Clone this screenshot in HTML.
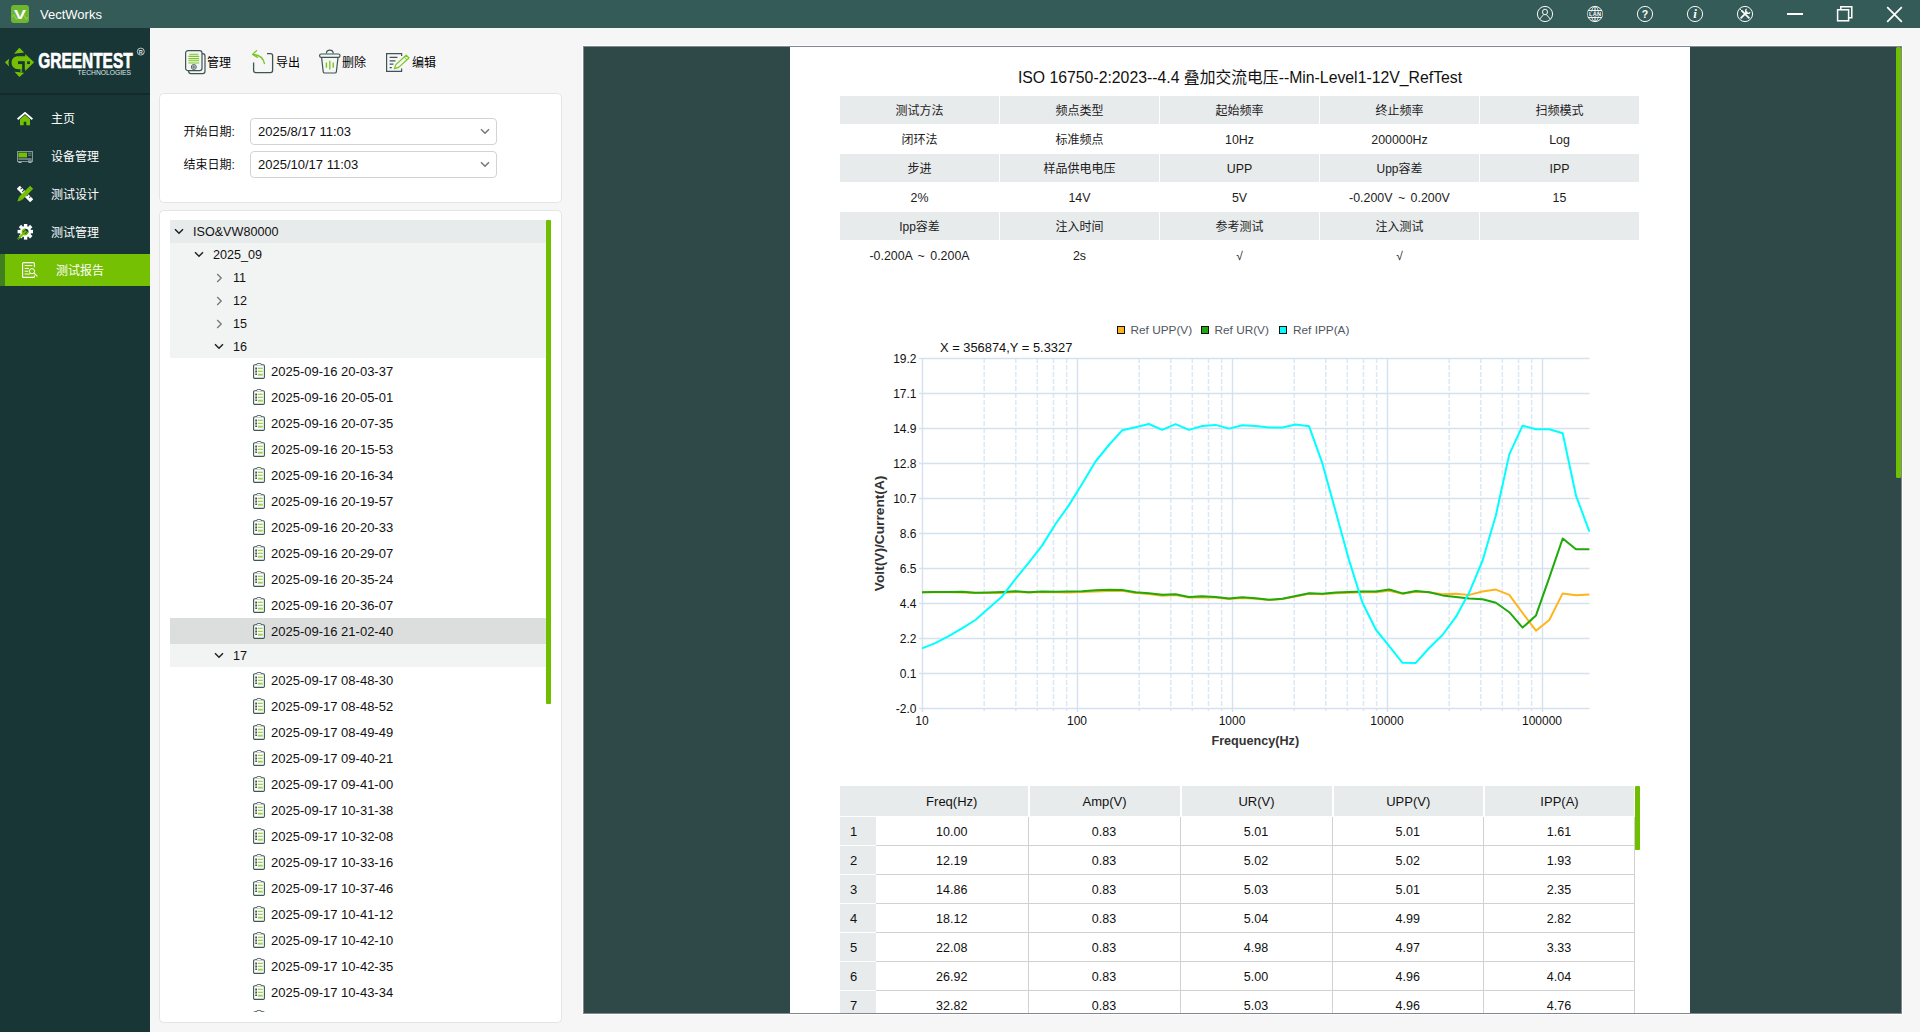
<!DOCTYPE html>
<html lang="zh-CN"><head><meta charset="utf-8"><title>VectWorks</title>
<style>
*{box-sizing:border-box;margin:0;padding:0}
html,body{width:1920px;height:1032px;overflow:hidden}
body{position:relative;background:#f6f6f6;font-family:"Liberation Sans","Noto Sans CJK SC",sans-serif;font-size:12px;color:#1a1a1a}
.abs{position:absolute}
#titlebar{position:absolute;left:0;top:0;width:1920px;height:28px;background:#355b58}
#titlebar .name{position:absolute;left:40px;top:1px;height:28px;line-height:28px;color:#fff;font-size:13px}
#sidebar{position:absolute;left:0;top:28px;width:150px;height:1004px;background:#193637}
#sidebar .sep{position:absolute;left:0;top:65px;width:150px;height:2px;background:#132a2b}
.mi{position:absolute;left:0;width:150px;height:32px;color:#fff;font-size:12px;line-height:32px}
.mi span{position:absolute;left:51px;top:0.8px;white-space:nowrap}
.mi svg{position:absolute;left:17px;top:8px}
.mi.act{background:#76c004}
.mi.act:before{content:"";position:absolute;left:0;top:0;width:5px;height:32px;background:#3f7f20}
.mi.act span{left:56px}
.mi.act svg{left:22px}
.panel{position:absolute;background:#fff;border:1px solid #e3e5e5;border-radius:4.500px}
.tb{position:absolute;top:51.3px;height:24px;font-size:12px;line-height:24px;color:#000;white-space:nowrap}
.tb span{position:absolute;top:0}
.lbl{position:absolute;font-size:12px;color:#111;white-space:nowrap}
.dt{position:absolute;left:250px;width:247px;height:27px;border:1px solid #d3d3d3;border-radius:4px;background:#fff;font-size:13px;line-height:25px;padding-left:7px;color:#111}
.dt svg{position:absolute;right:6px;top:9px}

.trow{position:absolute;left:170px;width:376px}
.trow .t{position:absolute;top:0;white-space:nowrap;font-size:13px;color:#111}
.trow svg{position:absolute}
#report{position:absolute;left:583px;top:46px;width:1319px;height:968px;background:#2f4949;border:1px solid #828790;box-shadow:0 0 0 1px #fff}
#rclip{position:absolute;left:0;top:0;width:1317px;height:966px;overflow:hidden}
#sheet{position:absolute;left:206px;top:0;width:900px;height:966px;background:#fff}
.ic{position:absolute;width:159px;height:28px;line-height:30.500px;text-align:center;font-size:12px;color:#1c1c1c;white-space:nowrap}
.ic.h{background:#e8ebec}
.ic.l{font-size:12.400px}
.ic.w{font-size:12.400px;word-spacing:2px}
.dc{position:absolute;height:29px;line-height:30.500px;text-align:center;font-size:12.5px;color:#111;border-right:1px solid #d2d2d2;border-bottom:1px solid #d2d2d2;background:#fff}
.dh{position:absolute;top:0;height:30px;line-height:31px;text-align:center;font-size:13px;color:#111;background:#e8ebec}
.rn{position:absolute;left:0;width:36px;height:28px;line-height:29px;background:#e8ebec;font-size:13px;padding-left:10px;color:#111}
</style></head><body>
<div id="titlebar"><svg class="abs" style="left:11px;top:5px" width="18" height="18" viewBox="0 0 18 18">
<rect x="0" y="0" width="18" height="18" rx="3" fill="#6db730"/>
<path d="M1.5 12c1-3 1.6-3 2.6 0s1.6 3 2.6 0M11.3 12c1-3 1.6-3 2.6 0s1.6 3 2.6 0" fill="none" stroke="#a9dd7c" stroke-width="0.7"/>
<text x="3" y="14.400" font-family="Liberation Sans,sans-serif" font-size="13.500" font-weight="bold" fill="#fff" textLength="12" lengthAdjust="spacingAndGlyphs">V</text></svg><div class="name">VectWorks</div><svg class="abs" style="left:1536px;top:5px" width="18" height="18" viewBox="0 0 18 18" fill="none" stroke="#fff" stroke-width="0.95">
<circle cx="9" cy="9" r="7.6"/><ellipse cx="9" cy="7" rx="2.5" ry="2.8"/><path d="M3.6 14.2L7.6 9.6M14.4 14.2L10.4 9.6"/></svg>
<svg class="abs" style="left:1586px;top:5px" width="18" height="18" viewBox="0 0 18 18" fill="none" stroke="#fff" stroke-width="1">
<circle cx="9" cy="9" r="7.6" stroke-width="0.95"/><ellipse cx="9" cy="9" rx="3.6" ry="7.6" stroke-width="0.8"/><path d="M9 1.4v15.2M2.2 5.6h13.6M2.2 12.4h13.6"/>
<rect x="1.6" y="6.6" width="14.8" height="4.8" fill="#355b58" stroke="none"/>
<text x="9" y="11.1" font-family="Liberation Sans,sans-serif" font-size="5.6" font-weight="bold" fill="#fff" stroke="none" text-anchor="middle" textLength="12">LAN</text></svg>
<svg class="abs" style="left:1635.5px;top:5px" width="18" height="18" viewBox="0 0 18 18" fill="none" stroke="#fff" stroke-width="1.1">
<circle cx="9" cy="9" r="7.6" stroke-width="0.95"/><text x="9" y="12.8" font-family="Liberation Sans,sans-serif" font-size="10.5" font-weight="bold" fill="#fff" stroke="none" text-anchor="middle">?</text></svg>
<svg class="abs" style="left:1685.7px;top:5px" width="18" height="18" viewBox="0 0 18 18" fill="none" stroke="#fff" stroke-width="1.1">
<circle cx="9" cy="9" r="7.6" stroke-width="0.95"/><text x="9" y="13.2" font-family="Liberation Serif,serif" font-size="13" font-weight="bold" font-style="italic" fill="#fff" stroke="none" text-anchor="middle">i</text></svg>
<svg class="abs" style="left:1736px;top:5px" width="18" height="18" viewBox="0 0 18 18" fill="none" stroke="#fff" stroke-width="1.1">
<circle cx="9" cy="9" r="7.6" stroke-width="0.95"/><path d="M4.6 13.4L11.4 6.600" stroke-width="1.700"/><path d="M10.600 3.900a2.500 2.500 0 1 0 3.500 3.500" stroke-width="1.300"/><path d="M5.400 5.400L13.400 13.400" stroke-width="1.700"/><path d="M3.800 3.800L6.200 6.200" stroke-width="0.900"/></svg>
<div class="abs" style="left:1787px;top:13px;width:16px;height:2px;background:#fff"></div>
<svg class="abs" style="left:1836px;top:5px" width="18" height="18" viewBox="0 0 18 18" fill="none" stroke="#fff" stroke-width="1.5">
<rect x="1.6" y="4.8" width="11" height="11"/><path d="M4.8 4.8V1.8h11v11h-3.2"/></svg>
<svg class="abs" style="left:1886px;top:5.5px" width="17" height="17" viewBox="0 0 17 17" fill="none" stroke="#fff" stroke-width="1.7">
<path d="M1.2 1.2l14.6 14.6M15.8 1.2L1.2 15.8"/></svg></div>
<div id="sidebar"><svg class="abs" style="left:0;top:12px" width="150" height="50" viewBox="0 0 150 50">
<g transform="translate(19.4,22.35)">
<path d="M0 -14.5L4.8 -9.9L-5.4 -8.7Z" fill="#76c004"/>
<path d="M0 14.7L-4.85 9.5L4.85 10.3Z" fill="#76c004"/>
<path d="M-14.5 0L-10.3 -3.7Q-11.4 0 -10.3 4.1Z" fill="#76c004"/>
<path d="M-1 -6H5.8V-8.3L14.7 0L5.8 8.7V6.8H-1C-5.5 6.8 -7.75 4 -7.75 0.4C-7.75 -3.4 -5.5 -6 -1 -6Z" fill="#76c004"/>
<rect x="-1.36" y="-1.16" width="6.76" height="2.9" fill="#193637"/>
<rect x="2.7" y="1.6" width="2.7" height="8.3" fill="#193637"/>
<rect x="7.75" y="-1" width="2.75" height="2.75" fill="#193637"/>
<rect x="0.8" y="6.8" width="1.9" height="3.4" fill="#5c9c12"/>
</g>
<text x="38.2" y="28.1" font-family="Liberation Sans,sans-serif" font-weight="bold" font-size="21.5" fill="#fff" stroke="#fff" stroke-width="0.7" textLength="94.5" lengthAdjust="spacingAndGlyphs">GREENTEST</text>
<text x="77.6" y="34.9" font-family="Liberation Sans,sans-serif" font-size="6.4" fill="#dfe8e8" textLength="53.4" lengthAdjust="spacingAndGlyphs">TECHNOLOGIES</text>
<circle cx="140.8" cy="11.6" r="3.5" fill="none" stroke="#dfe7e7" stroke-width="0.8"/>
<text x="140.8" y="13.7" font-family="Liberation Sans,sans-serif" font-size="5.5" font-weight="bold" fill="#dfe7e7" text-anchor="middle">R</text>
</svg><div class="sep"></div>
<div class="mi" style="top:74px"><svg style="top:10px" width="16" height="16" viewBox="0 0 16 16"><path d="M3 7.2L8 3l5 4.200V13.300H9.300V9.800H6.700V13.300H3Z" fill="#76c004"/><path d="M0.600 7.300L8 0.900l7.400 6.400" fill="none" stroke="#fff" stroke-width="1.8" stroke-linejoin="miter"/></svg><span>主页</span></div>
<div class="mi" style="top:112px"><svg style="top:8.5px" width="16" height="16" viewBox="0 0 16 16"><rect x="0.4" y="2.600" width="15.200" height="9.800" fill="none" stroke="#9fb0b0" stroke-width="0.800"/><rect x="1.400" y="3.600" width="8.600" height="4.800" fill="#76c004"/><path d="M1.400 10h13.200M1.400 13.400h3.200M11.400 13.400h3.200" stroke="#c9d3d3" stroke-width="0.900"/><path d="M11 4.200h3.600M11 6.200h3.600" stroke="#8fa0a0" stroke-width="0.800"/><circle cx="12" cy="11.300" r="0.600" fill="#c9d3d3"/><circle cx="14" cy="11.300" r="0.600" fill="#c9d3d3"/></svg><span>设备管理</span></div>
<div class="mi" style="top:150px"><svg width="16" height="16" viewBox="0 0 16 16"><g transform="rotate(45 8 8)"><rect x="-1.500" y="5.800" width="19" height="4.400" fill="#fff"/><path d="M1.500 5.800v2M4.500 5.800v2.600M7.500 5.800v2M10.500 5.800v2.600M13.500 5.800v2" stroke="#193637" stroke-width="1"/></g><g transform="rotate(-45 8 8)"><rect x="1.600" y="5.800" width="13.400" height="4.400" fill="#76c004"/><path d="M1.600 5.800L-2.600 8l4.200 2.200Z" fill="#76c004"/><rect x="15" y="5.800" width="2.400" height="4.400" fill="#76c004"/></g></svg><span>测试设计</span></div>
<div class="mi" style="top:188px"><svg width="16" height="16" viewBox="0 0 16 16"><g transform="translate(8.600,7.600)"><rect x="-1.700" y="-8" width="3.400" height="3.400" transform="rotate(0)" fill="#fff"/><rect x="-1.700" y="-8" width="3.400" height="3.400" transform="rotate(45)" fill="#fff"/><rect x="-1.700" y="-8" width="3.400" height="3.400" transform="rotate(90)" fill="#fff"/><rect x="-1.700" y="-8" width="3.400" height="3.400" transform="rotate(135)" fill="#fff"/><rect x="-1.700" y="-8" width="3.400" height="3.400" transform="rotate(180)" fill="#fff"/><rect x="-1.700" y="-8" width="3.400" height="3.400" transform="rotate(225)" fill="#fff"/><rect x="-1.700" y="-8" width="3.400" height="3.400" transform="rotate(270)" fill="#fff"/><rect x="-1.700" y="-8" width="3.400" height="3.400" transform="rotate(315)" fill="#fff"/><circle r="5.600" fill="#fff"/><circle r="2.900" fill="#193637"/></g><path d="M1.400 14.600L8.600 7.400" stroke="#76c004" stroke-width="2" stroke-linecap="round"/><path d="M8.200 5.400a2.600 2.600 0 1 0 2.400 2.400" fill="none" stroke="#76c004" stroke-width="1.600"/><circle cx="1.700" cy="14.300" r="0.500" fill="#193637"/></svg><span>测试管理</span></div>
<div class="mi act" style="top:226px"><svg width="16" height="16" viewBox="0 0 16 16" fill="none" stroke="#fff"><path d="M12.400 5.200V1.600a1 1 0 0 0 -1 -1H1.600a1 1 0 0 0 -1 1V14.400a1 1 0 0 0 1 1H11.400a1 1 0 0 0 1 -1V13.600" stroke-width="1.100"/><path d="M2.600 3.600H10.400M2.600 6.400H7M2.600 9.200H6.400M2.600 12H8.200" stroke-width="1"/><circle cx="10" cy="9.200" r="2.600" stroke-width="1"/><path d="M12 11.200L15.400 14.400" stroke-width="1.100"/></svg><span>测试报告</span></div>
</div>
<svg class="abs" style="left:184px;top:49px" width="23" height="26" viewBox="0 0 23 26" fill="none">
<rect x="4.600" y="4.600" width="16.400" height="20" rx="2.400" stroke="#3d5553" stroke-width="1.200" fill="#f6f6f6"/>
<rect x="1.600" y="1.600" width="16.400" height="20" rx="2.400" stroke="#3d5553" stroke-width="1.200" fill="#f6f6f6"/>
<path d="M5.400 5.200h8.800M4.400 7.400h10.800M4.400 9.600h10.800M4.400 11.800h10.800M4.400 14h10.800" stroke="#7ac621" stroke-width="1.100"/>
<circle cx="9.800" cy="18" r="2.500" stroke="#3d5553" stroke-width="0.900"/><path d="M9.800 16.200v3.600M8 18h3.600" stroke="#3d5553" stroke-width="0.800"/></svg><div class="tb" style="left:207px">管理</div>
<svg class="abs" style="left:251px;top:49px" width="24" height="26" viewBox="0 0 24 26" fill="none">
<path d="M16 4.600H19.600a2 2 0 0 1 2 2V21.600a2 2 0 0 1 -2 2H4.600a2 2 0 0 1 -2 -2V13.400" stroke="#3d5553" stroke-width="1.300"/>
<path d="M1.800 5.400C7.400 5.600 12.400 8.600 13.600 15.200" stroke="#7ac621" stroke-width="1.300"/>
<path d="M5.600 1.600L1.600 5.400L6.400 8.400" stroke="#7ac621" stroke-width="1.300" stroke-linejoin="round" stroke-linecap="round"/></svg><div class="tb" style="left:276px">导出</div>
<svg class="abs" style="left:318px;top:49px" width="24" height="26" viewBox="0 0 24 26" fill="none">
<path d="M8.400 4.600a3.400 3.400 0 0 1 6.800 0" stroke="#3d5553" stroke-width="1.200"/>
<rect x="1.600" y="5" width="20.400" height="3.400" rx="1.600" stroke="#3d5553" stroke-width="1.200"/>
<path d="M3.600 8.600L5.200 22.600a1.600 1.600 0 0 0 1.600 1.400H16.800a1.600 1.600 0 0 0 1.600 -1.400L20 8.600" stroke="#3d5553" stroke-width="1.200"/>
<path d="M8.400 13.600v5.200M11.800 11.800v8.800M15.200 13.600v5.200" stroke="#7ac621" stroke-width="1.400"/></svg><div class="tb" style="left:342px">删除</div>
<svg class="abs" style="left:385px;top:49px" width="26" height="26" viewBox="0 0 26 26" fill="none">
<path d="M16.600 19.600V22.400H1.600V4.600H16.600V7" stroke="#3d5553" stroke-width="1.200"/>
<path d="M4.600 8.400H12.400M4.600 11.800H10.400M4.600 15.200H8.400M4.600 18.600H6.800" stroke="#3d5553" stroke-width="1.200"/>
<path d="M9.400 19.600L10.800 15.600L21.200 6.200L24 9L13.600 18.400Z" stroke="#7ac621" stroke-width="1.200" stroke-linejoin="round" fill="#f6f6f6"/>
<path d="M19.200 8L22 10.800" stroke="#7ac621" stroke-width="1"/></svg><div class="tb" style="left:412px">编辑</div>
<div class="panel" style="left:159px;top:93px;width:403px;height:110px"></div>
<div class="lbl" style="left:183.5px;top:119px;line-height:27px">开始日期:</div><div class="dt" style="top:118px">2025/8/17 11:03<svg width="10" height="7" viewBox="0 0 10 7" fill="none"><path d="M1 1.200L5 5.200L9 1.200" stroke="#777" stroke-width="1.500"/></svg></div>
<div class="lbl" style="left:183.5px;top:152px;line-height:27px">结束日期:</div><div class="dt" style="top:151px">2025/10/17 11:03<svg width="10" height="7" viewBox="0 0 10 7" fill="none"><path d="M1 1.200L5 5.200L9 1.200" stroke="#777" stroke-width="1.500"/></svg></div>
<div class="panel" style="left:159px;top:210px;width:403px;height:813px"></div>
<div class="abs" style="left:0;top:220px;width:560px;height:792px;overflow:hidden">
<div class="trow" style="top:0px;height:23px;background:#e8ebeb"><svg style="left:4px;top:8px" width="10" height="7" viewBox="0 0 10 7" fill="none"><path d="M1 1.200L5 5.200L9 1.200" stroke="#222" stroke-width="1.500"/></svg><div class="t" style="left:23px;line-height:24.6px;font-size:12.600px">ISO&amp;VW80000</div></div>
<div class="trow" style="top:23px;height:23px;background:#f2f4f4"><svg style="left:24px;top:8px" width="10" height="7" viewBox="0 0 10 7" fill="none"><path d="M1 1.200L5 5.200L9 1.200" stroke="#222" stroke-width="1.500"/></svg><div class="t" style="left:43px;line-height:24.6px;font-size:12.600px">2025_09</div></div>
<div class="trow" style="top:46px;height:23px;background:#f2f4f4"><svg style="left:46px;top:6.500px" width="7" height="10" viewBox="0 0 7 10" fill="none"><path d="M1.200 1L5.200 5L1.200 9" stroke="#777" stroke-width="1.300"/></svg><div class="t" style="left:63px;line-height:24.6px;font-size:12.600px">11</div></div>
<div class="trow" style="top:69px;height:23px;background:#f2f4f4"><svg style="left:46px;top:6.500px" width="7" height="10" viewBox="0 0 7 10" fill="none"><path d="M1.200 1L5.200 5L1.200 9" stroke="#777" stroke-width="1.300"/></svg><div class="t" style="left:63px;line-height:24.6px;font-size:12.600px">12</div></div>
<div class="trow" style="top:92px;height:23px;background:#f2f4f4"><svg style="left:46px;top:6.500px" width="7" height="10" viewBox="0 0 7 10" fill="none"><path d="M1.200 1L5.200 5L1.200 9" stroke="#777" stroke-width="1.300"/></svg><div class="t" style="left:63px;line-height:24.6px;font-size:12.600px">15</div></div>
<div class="trow" style="top:115px;height:23px;background:#f2f4f4"><svg style="left:44px;top:8px" width="10" height="7" viewBox="0 0 10 7" fill="none"><path d="M1 1.200L5 5.200L9 1.200" stroke="#222" stroke-width="1.500"/></svg><div class="t" style="left:63px;line-height:24.6px;font-size:12.600px">16</div></div>
<div class="trow" style="top:138px;height:26px;background:transparent"><svg style="left:83px;top:5px" width="12" height="16" viewBox="0 0 12 16" fill="none"><rect x="0.600" y="1.800" width="10.800" height="13.600" rx="1.200" stroke="#3d5553" stroke-width="1.100" fill="#fff"/><path d="M3.800 2V1.200a.8 .8 0 0 1 .8 -.8H7.400a.8 .8 0 0 1 .8 .8V2" stroke="#3d5553" stroke-width="0.900" fill="#fff"/><path d="M2.400 5.200h1.400M2.400 8.200h1.400M2.400 11.200h1.400" stroke="#222" stroke-width="1.500"/><path d="M2.400 6.600h1.400M2.400 9.600h1.400" stroke="#222" stroke-width="0.600"/><path d="M4.800 5.200H9.800M4.800 8.200H9.800M4.800 11.200H9.800" stroke="#7ac621" stroke-width="1.100"/><path d="M4.800 12.600H9.800" stroke="#b9dd8a" stroke-width="1"/></svg><div class="t" style="left:101px;line-height:27.4px">2025-09-16 20-03-37</div></div>
<div class="trow" style="top:164px;height:26px;background:transparent"><svg style="left:83px;top:5px" width="12" height="16" viewBox="0 0 12 16" fill="none"><rect x="0.600" y="1.800" width="10.800" height="13.600" rx="1.200" stroke="#3d5553" stroke-width="1.100" fill="#fff"/><path d="M3.800 2V1.200a.8 .8 0 0 1 .8 -.8H7.400a.8 .8 0 0 1 .8 .8V2" stroke="#3d5553" stroke-width="0.900" fill="#fff"/><path d="M2.400 5.200h1.400M2.400 8.200h1.400M2.400 11.200h1.400" stroke="#222" stroke-width="1.500"/><path d="M2.400 6.600h1.400M2.400 9.600h1.400" stroke="#222" stroke-width="0.600"/><path d="M4.800 5.200H9.800M4.800 8.200H9.800M4.800 11.200H9.800" stroke="#7ac621" stroke-width="1.100"/><path d="M4.800 12.600H9.800" stroke="#b9dd8a" stroke-width="1"/></svg><div class="t" style="left:101px;line-height:27.4px">2025-09-16 20-05-01</div></div>
<div class="trow" style="top:190px;height:26px;background:transparent"><svg style="left:83px;top:5px" width="12" height="16" viewBox="0 0 12 16" fill="none"><rect x="0.600" y="1.800" width="10.800" height="13.600" rx="1.200" stroke="#3d5553" stroke-width="1.100" fill="#fff"/><path d="M3.800 2V1.200a.8 .8 0 0 1 .8 -.8H7.400a.8 .8 0 0 1 .8 .8V2" stroke="#3d5553" stroke-width="0.900" fill="#fff"/><path d="M2.400 5.200h1.400M2.400 8.200h1.400M2.400 11.200h1.400" stroke="#222" stroke-width="1.500"/><path d="M2.400 6.600h1.400M2.400 9.600h1.400" stroke="#222" stroke-width="0.600"/><path d="M4.800 5.200H9.800M4.800 8.200H9.800M4.800 11.200H9.800" stroke="#7ac621" stroke-width="1.100"/><path d="M4.800 12.600H9.800" stroke="#b9dd8a" stroke-width="1"/></svg><div class="t" style="left:101px;line-height:27.4px">2025-09-16 20-07-35</div></div>
<div class="trow" style="top:216px;height:26px;background:transparent"><svg style="left:83px;top:5px" width="12" height="16" viewBox="0 0 12 16" fill="none"><rect x="0.600" y="1.800" width="10.800" height="13.600" rx="1.200" stroke="#3d5553" stroke-width="1.100" fill="#fff"/><path d="M3.800 2V1.200a.8 .8 0 0 1 .8 -.8H7.400a.8 .8 0 0 1 .8 .8V2" stroke="#3d5553" stroke-width="0.900" fill="#fff"/><path d="M2.400 5.200h1.400M2.400 8.200h1.400M2.400 11.200h1.400" stroke="#222" stroke-width="1.500"/><path d="M2.400 6.600h1.400M2.400 9.600h1.400" stroke="#222" stroke-width="0.600"/><path d="M4.800 5.200H9.800M4.800 8.200H9.800M4.800 11.200H9.800" stroke="#7ac621" stroke-width="1.100"/><path d="M4.800 12.600H9.800" stroke="#b9dd8a" stroke-width="1"/></svg><div class="t" style="left:101px;line-height:27.4px">2025-09-16 20-15-53</div></div>
<div class="trow" style="top:242px;height:26px;background:transparent"><svg style="left:83px;top:5px" width="12" height="16" viewBox="0 0 12 16" fill="none"><rect x="0.600" y="1.800" width="10.800" height="13.600" rx="1.200" stroke="#3d5553" stroke-width="1.100" fill="#fff"/><path d="M3.800 2V1.200a.8 .8 0 0 1 .8 -.8H7.400a.8 .8 0 0 1 .8 .8V2" stroke="#3d5553" stroke-width="0.900" fill="#fff"/><path d="M2.400 5.200h1.400M2.400 8.200h1.400M2.400 11.200h1.400" stroke="#222" stroke-width="1.500"/><path d="M2.400 6.600h1.400M2.400 9.600h1.400" stroke="#222" stroke-width="0.600"/><path d="M4.800 5.200H9.800M4.800 8.200H9.800M4.800 11.200H9.800" stroke="#7ac621" stroke-width="1.100"/><path d="M4.800 12.600H9.800" stroke="#b9dd8a" stroke-width="1"/></svg><div class="t" style="left:101px;line-height:27.4px">2025-09-16 20-16-34</div></div>
<div class="trow" style="top:268px;height:26px;background:transparent"><svg style="left:83px;top:5px" width="12" height="16" viewBox="0 0 12 16" fill="none"><rect x="0.600" y="1.800" width="10.800" height="13.600" rx="1.200" stroke="#3d5553" stroke-width="1.100" fill="#fff"/><path d="M3.800 2V1.200a.8 .8 0 0 1 .8 -.8H7.400a.8 .8 0 0 1 .8 .8V2" stroke="#3d5553" stroke-width="0.900" fill="#fff"/><path d="M2.400 5.200h1.400M2.400 8.200h1.400M2.400 11.200h1.400" stroke="#222" stroke-width="1.500"/><path d="M2.400 6.600h1.400M2.400 9.600h1.400" stroke="#222" stroke-width="0.600"/><path d="M4.800 5.200H9.800M4.800 8.200H9.800M4.800 11.200H9.800" stroke="#7ac621" stroke-width="1.100"/><path d="M4.800 12.600H9.800" stroke="#b9dd8a" stroke-width="1"/></svg><div class="t" style="left:101px;line-height:27.4px">2025-09-16 20-19-57</div></div>
<div class="trow" style="top:294px;height:26px;background:transparent"><svg style="left:83px;top:5px" width="12" height="16" viewBox="0 0 12 16" fill="none"><rect x="0.600" y="1.800" width="10.800" height="13.600" rx="1.200" stroke="#3d5553" stroke-width="1.100" fill="#fff"/><path d="M3.800 2V1.200a.8 .8 0 0 1 .8 -.8H7.400a.8 .8 0 0 1 .8 .8V2" stroke="#3d5553" stroke-width="0.900" fill="#fff"/><path d="M2.400 5.200h1.400M2.400 8.200h1.400M2.400 11.200h1.400" stroke="#222" stroke-width="1.500"/><path d="M2.400 6.600h1.400M2.400 9.600h1.400" stroke="#222" stroke-width="0.600"/><path d="M4.800 5.200H9.800M4.800 8.200H9.800M4.800 11.200H9.800" stroke="#7ac621" stroke-width="1.100"/><path d="M4.800 12.600H9.800" stroke="#b9dd8a" stroke-width="1"/></svg><div class="t" style="left:101px;line-height:27.4px">2025-09-16 20-20-33</div></div>
<div class="trow" style="top:320px;height:26px;background:transparent"><svg style="left:83px;top:5px" width="12" height="16" viewBox="0 0 12 16" fill="none"><rect x="0.600" y="1.800" width="10.800" height="13.600" rx="1.200" stroke="#3d5553" stroke-width="1.100" fill="#fff"/><path d="M3.800 2V1.200a.8 .8 0 0 1 .8 -.8H7.400a.8 .8 0 0 1 .8 .8V2" stroke="#3d5553" stroke-width="0.900" fill="#fff"/><path d="M2.400 5.200h1.400M2.400 8.200h1.400M2.400 11.200h1.400" stroke="#222" stroke-width="1.500"/><path d="M2.400 6.600h1.400M2.400 9.600h1.400" stroke="#222" stroke-width="0.600"/><path d="M4.800 5.200H9.800M4.800 8.200H9.800M4.800 11.200H9.800" stroke="#7ac621" stroke-width="1.100"/><path d="M4.800 12.600H9.800" stroke="#b9dd8a" stroke-width="1"/></svg><div class="t" style="left:101px;line-height:27.4px">2025-09-16 20-29-07</div></div>
<div class="trow" style="top:346px;height:26px;background:transparent"><svg style="left:83px;top:5px" width="12" height="16" viewBox="0 0 12 16" fill="none"><rect x="0.600" y="1.800" width="10.800" height="13.600" rx="1.200" stroke="#3d5553" stroke-width="1.100" fill="#fff"/><path d="M3.800 2V1.200a.8 .8 0 0 1 .8 -.8H7.400a.8 .8 0 0 1 .8 .8V2" stroke="#3d5553" stroke-width="0.900" fill="#fff"/><path d="M2.400 5.200h1.400M2.400 8.200h1.400M2.400 11.200h1.400" stroke="#222" stroke-width="1.500"/><path d="M2.400 6.600h1.400M2.400 9.600h1.400" stroke="#222" stroke-width="0.600"/><path d="M4.800 5.200H9.800M4.800 8.200H9.800M4.800 11.200H9.800" stroke="#7ac621" stroke-width="1.100"/><path d="M4.800 12.600H9.800" stroke="#b9dd8a" stroke-width="1"/></svg><div class="t" style="left:101px;line-height:27.4px">2025-09-16 20-35-24</div></div>
<div class="trow" style="top:372px;height:26px;background:transparent"><svg style="left:83px;top:5px" width="12" height="16" viewBox="0 0 12 16" fill="none"><rect x="0.600" y="1.800" width="10.800" height="13.600" rx="1.200" stroke="#3d5553" stroke-width="1.100" fill="#fff"/><path d="M3.800 2V1.200a.8 .8 0 0 1 .8 -.8H7.400a.8 .8 0 0 1 .8 .8V2" stroke="#3d5553" stroke-width="0.900" fill="#fff"/><path d="M2.400 5.200h1.400M2.400 8.200h1.400M2.400 11.200h1.400" stroke="#222" stroke-width="1.500"/><path d="M2.400 6.600h1.400M2.400 9.600h1.400" stroke="#222" stroke-width="0.600"/><path d="M4.800 5.200H9.800M4.800 8.200H9.800M4.800 11.200H9.800" stroke="#7ac621" stroke-width="1.100"/><path d="M4.800 12.600H9.800" stroke="#b9dd8a" stroke-width="1"/></svg><div class="t" style="left:101px;line-height:27.4px">2025-09-16 20-36-07</div></div>
<div class="trow" style="top:398px;height:26px;background:#dcdede"><svg style="left:83px;top:5px" width="12" height="16" viewBox="0 0 12 16" fill="none"><rect x="0.600" y="1.800" width="10.800" height="13.600" rx="1.200" stroke="#3d5553" stroke-width="1.100" fill="#fff"/><path d="M3.800 2V1.200a.8 .8 0 0 1 .8 -.8H7.400a.8 .8 0 0 1 .8 .8V2" stroke="#3d5553" stroke-width="0.900" fill="#fff"/><path d="M2.400 5.200h1.400M2.400 8.200h1.400M2.400 11.200h1.400" stroke="#222" stroke-width="1.500"/><path d="M2.400 6.600h1.400M2.400 9.600h1.400" stroke="#222" stroke-width="0.600"/><path d="M4.800 5.200H9.800M4.800 8.200H9.800M4.800 11.200H9.800" stroke="#7ac621" stroke-width="1.100"/><path d="M4.800 12.600H9.800" stroke="#b9dd8a" stroke-width="1"/></svg><div class="t" style="left:101px;line-height:27.4px">2025-09-16 21-02-40</div></div>
<div class="trow" style="top:424px;height:23px;background:#f2f4f4"><svg style="left:44px;top:8px" width="10" height="7" viewBox="0 0 10 7" fill="none"><path d="M1 1.200L5 5.200L9 1.200" stroke="#222" stroke-width="1.500"/></svg><div class="t" style="left:63px;line-height:24.6px;font-size:12.600px">17</div></div>
<div class="trow" style="top:447px;height:26px;background:transparent"><svg style="left:83px;top:5px" width="12" height="16" viewBox="0 0 12 16" fill="none"><rect x="0.600" y="1.800" width="10.800" height="13.600" rx="1.200" stroke="#3d5553" stroke-width="1.100" fill="#fff"/><path d="M3.800 2V1.200a.8 .8 0 0 1 .8 -.8H7.400a.8 .8 0 0 1 .8 .8V2" stroke="#3d5553" stroke-width="0.900" fill="#fff"/><path d="M2.400 5.200h1.400M2.400 8.200h1.400M2.400 11.200h1.400" stroke="#222" stroke-width="1.500"/><path d="M2.400 6.600h1.400M2.400 9.600h1.400" stroke="#222" stroke-width="0.600"/><path d="M4.800 5.200H9.800M4.800 8.200H9.800M4.800 11.200H9.800" stroke="#7ac621" stroke-width="1.100"/><path d="M4.800 12.600H9.800" stroke="#b9dd8a" stroke-width="1"/></svg><div class="t" style="left:101px;line-height:27.4px">2025-09-17 08-48-30</div></div>
<div class="trow" style="top:473px;height:26px;background:transparent"><svg style="left:83px;top:5px" width="12" height="16" viewBox="0 0 12 16" fill="none"><rect x="0.600" y="1.800" width="10.800" height="13.600" rx="1.200" stroke="#3d5553" stroke-width="1.100" fill="#fff"/><path d="M3.800 2V1.200a.8 .8 0 0 1 .8 -.8H7.400a.8 .8 0 0 1 .8 .8V2" stroke="#3d5553" stroke-width="0.900" fill="#fff"/><path d="M2.400 5.200h1.400M2.400 8.200h1.400M2.400 11.200h1.400" stroke="#222" stroke-width="1.500"/><path d="M2.400 6.600h1.400M2.400 9.600h1.400" stroke="#222" stroke-width="0.600"/><path d="M4.800 5.200H9.800M4.800 8.200H9.800M4.800 11.200H9.800" stroke="#7ac621" stroke-width="1.100"/><path d="M4.800 12.600H9.800" stroke="#b9dd8a" stroke-width="1"/></svg><div class="t" style="left:101px;line-height:27.4px">2025-09-17 08-48-52</div></div>
<div class="trow" style="top:499px;height:26px;background:transparent"><svg style="left:83px;top:5px" width="12" height="16" viewBox="0 0 12 16" fill="none"><rect x="0.600" y="1.800" width="10.800" height="13.600" rx="1.200" stroke="#3d5553" stroke-width="1.100" fill="#fff"/><path d="M3.800 2V1.200a.8 .8 0 0 1 .8 -.8H7.400a.8 .8 0 0 1 .8 .8V2" stroke="#3d5553" stroke-width="0.900" fill="#fff"/><path d="M2.400 5.200h1.400M2.400 8.200h1.400M2.400 11.200h1.400" stroke="#222" stroke-width="1.500"/><path d="M2.400 6.600h1.400M2.400 9.600h1.400" stroke="#222" stroke-width="0.600"/><path d="M4.800 5.200H9.800M4.800 8.200H9.800M4.800 11.200H9.800" stroke="#7ac621" stroke-width="1.100"/><path d="M4.800 12.600H9.800" stroke="#b9dd8a" stroke-width="1"/></svg><div class="t" style="left:101px;line-height:27.4px">2025-09-17 08-49-49</div></div>
<div class="trow" style="top:525px;height:26px;background:transparent"><svg style="left:83px;top:5px" width="12" height="16" viewBox="0 0 12 16" fill="none"><rect x="0.600" y="1.800" width="10.800" height="13.600" rx="1.200" stroke="#3d5553" stroke-width="1.100" fill="#fff"/><path d="M3.800 2V1.200a.8 .8 0 0 1 .8 -.8H7.400a.8 .8 0 0 1 .8 .8V2" stroke="#3d5553" stroke-width="0.900" fill="#fff"/><path d="M2.400 5.200h1.400M2.400 8.200h1.400M2.400 11.200h1.400" stroke="#222" stroke-width="1.500"/><path d="M2.400 6.600h1.400M2.400 9.600h1.400" stroke="#222" stroke-width="0.600"/><path d="M4.800 5.200H9.800M4.800 8.200H9.800M4.800 11.200H9.800" stroke="#7ac621" stroke-width="1.100"/><path d="M4.800 12.600H9.800" stroke="#b9dd8a" stroke-width="1"/></svg><div class="t" style="left:101px;line-height:27.4px">2025-09-17 09-40-21</div></div>
<div class="trow" style="top:551px;height:26px;background:transparent"><svg style="left:83px;top:5px" width="12" height="16" viewBox="0 0 12 16" fill="none"><rect x="0.600" y="1.800" width="10.800" height="13.600" rx="1.200" stroke="#3d5553" stroke-width="1.100" fill="#fff"/><path d="M3.800 2V1.200a.8 .8 0 0 1 .8 -.8H7.400a.8 .8 0 0 1 .8 .8V2" stroke="#3d5553" stroke-width="0.900" fill="#fff"/><path d="M2.400 5.200h1.400M2.400 8.200h1.400M2.400 11.200h1.400" stroke="#222" stroke-width="1.500"/><path d="M2.400 6.600h1.400M2.400 9.600h1.400" stroke="#222" stroke-width="0.600"/><path d="M4.800 5.200H9.800M4.800 8.200H9.800M4.800 11.200H9.800" stroke="#7ac621" stroke-width="1.100"/><path d="M4.800 12.600H9.800" stroke="#b9dd8a" stroke-width="1"/></svg><div class="t" style="left:101px;line-height:27.4px">2025-09-17 09-41-00</div></div>
<div class="trow" style="top:577px;height:26px;background:transparent"><svg style="left:83px;top:5px" width="12" height="16" viewBox="0 0 12 16" fill="none"><rect x="0.600" y="1.800" width="10.800" height="13.600" rx="1.200" stroke="#3d5553" stroke-width="1.100" fill="#fff"/><path d="M3.800 2V1.200a.8 .8 0 0 1 .8 -.8H7.400a.8 .8 0 0 1 .8 .8V2" stroke="#3d5553" stroke-width="0.900" fill="#fff"/><path d="M2.400 5.200h1.400M2.400 8.200h1.400M2.400 11.200h1.400" stroke="#222" stroke-width="1.500"/><path d="M2.400 6.600h1.400M2.400 9.600h1.400" stroke="#222" stroke-width="0.600"/><path d="M4.800 5.200H9.800M4.800 8.200H9.800M4.800 11.200H9.800" stroke="#7ac621" stroke-width="1.100"/><path d="M4.800 12.600H9.800" stroke="#b9dd8a" stroke-width="1"/></svg><div class="t" style="left:101px;line-height:27.4px">2025-09-17 10-31-38</div></div>
<div class="trow" style="top:603px;height:26px;background:transparent"><svg style="left:83px;top:5px" width="12" height="16" viewBox="0 0 12 16" fill="none"><rect x="0.600" y="1.800" width="10.800" height="13.600" rx="1.200" stroke="#3d5553" stroke-width="1.100" fill="#fff"/><path d="M3.800 2V1.200a.8 .8 0 0 1 .8 -.8H7.400a.8 .8 0 0 1 .8 .8V2" stroke="#3d5553" stroke-width="0.900" fill="#fff"/><path d="M2.400 5.200h1.400M2.400 8.200h1.400M2.400 11.200h1.400" stroke="#222" stroke-width="1.500"/><path d="M2.400 6.600h1.400M2.400 9.600h1.400" stroke="#222" stroke-width="0.600"/><path d="M4.800 5.200H9.800M4.800 8.200H9.800M4.800 11.200H9.800" stroke="#7ac621" stroke-width="1.100"/><path d="M4.800 12.600H9.800" stroke="#b9dd8a" stroke-width="1"/></svg><div class="t" style="left:101px;line-height:27.4px">2025-09-17 10-32-08</div></div>
<div class="trow" style="top:629px;height:26px;background:transparent"><svg style="left:83px;top:5px" width="12" height="16" viewBox="0 0 12 16" fill="none"><rect x="0.600" y="1.800" width="10.800" height="13.600" rx="1.200" stroke="#3d5553" stroke-width="1.100" fill="#fff"/><path d="M3.800 2V1.200a.8 .8 0 0 1 .8 -.8H7.400a.8 .8 0 0 1 .8 .8V2" stroke="#3d5553" stroke-width="0.900" fill="#fff"/><path d="M2.400 5.200h1.400M2.400 8.200h1.400M2.400 11.200h1.400" stroke="#222" stroke-width="1.500"/><path d="M2.400 6.600h1.400M2.400 9.600h1.400" stroke="#222" stroke-width="0.600"/><path d="M4.800 5.200H9.800M4.800 8.200H9.800M4.800 11.200H9.800" stroke="#7ac621" stroke-width="1.100"/><path d="M4.800 12.600H9.800" stroke="#b9dd8a" stroke-width="1"/></svg><div class="t" style="left:101px;line-height:27.4px">2025-09-17 10-33-16</div></div>
<div class="trow" style="top:655px;height:26px;background:transparent"><svg style="left:83px;top:5px" width="12" height="16" viewBox="0 0 12 16" fill="none"><rect x="0.600" y="1.800" width="10.800" height="13.600" rx="1.200" stroke="#3d5553" stroke-width="1.100" fill="#fff"/><path d="M3.800 2V1.200a.8 .8 0 0 1 .8 -.8H7.400a.8 .8 0 0 1 .8 .8V2" stroke="#3d5553" stroke-width="0.900" fill="#fff"/><path d="M2.400 5.200h1.400M2.400 8.200h1.400M2.400 11.200h1.400" stroke="#222" stroke-width="1.500"/><path d="M2.400 6.600h1.400M2.400 9.600h1.400" stroke="#222" stroke-width="0.600"/><path d="M4.800 5.200H9.800M4.800 8.200H9.800M4.800 11.200H9.800" stroke="#7ac621" stroke-width="1.100"/><path d="M4.800 12.600H9.800" stroke="#b9dd8a" stroke-width="1"/></svg><div class="t" style="left:101px;line-height:27.4px">2025-09-17 10-37-46</div></div>
<div class="trow" style="top:681px;height:26px;background:transparent"><svg style="left:83px;top:5px" width="12" height="16" viewBox="0 0 12 16" fill="none"><rect x="0.600" y="1.800" width="10.800" height="13.600" rx="1.200" stroke="#3d5553" stroke-width="1.100" fill="#fff"/><path d="M3.800 2V1.200a.8 .8 0 0 1 .8 -.8H7.400a.8 .8 0 0 1 .8 .8V2" stroke="#3d5553" stroke-width="0.900" fill="#fff"/><path d="M2.400 5.200h1.400M2.400 8.200h1.400M2.400 11.200h1.400" stroke="#222" stroke-width="1.500"/><path d="M2.400 6.600h1.400M2.400 9.600h1.400" stroke="#222" stroke-width="0.600"/><path d="M4.800 5.200H9.800M4.800 8.200H9.800M4.800 11.200H9.800" stroke="#7ac621" stroke-width="1.100"/><path d="M4.800 12.600H9.800" stroke="#b9dd8a" stroke-width="1"/></svg><div class="t" style="left:101px;line-height:27.4px">2025-09-17 10-41-12</div></div>
<div class="trow" style="top:707px;height:26px;background:transparent"><svg style="left:83px;top:5px" width="12" height="16" viewBox="0 0 12 16" fill="none"><rect x="0.600" y="1.800" width="10.800" height="13.600" rx="1.200" stroke="#3d5553" stroke-width="1.100" fill="#fff"/><path d="M3.800 2V1.200a.8 .8 0 0 1 .8 -.8H7.400a.8 .8 0 0 1 .8 .8V2" stroke="#3d5553" stroke-width="0.900" fill="#fff"/><path d="M2.400 5.200h1.400M2.400 8.200h1.400M2.400 11.200h1.400" stroke="#222" stroke-width="1.500"/><path d="M2.400 6.600h1.400M2.400 9.600h1.400" stroke="#222" stroke-width="0.600"/><path d="M4.800 5.200H9.800M4.800 8.200H9.800M4.800 11.200H9.800" stroke="#7ac621" stroke-width="1.100"/><path d="M4.800 12.600H9.800" stroke="#b9dd8a" stroke-width="1"/></svg><div class="t" style="left:101px;line-height:27.4px">2025-09-17 10-42-10</div></div>
<div class="trow" style="top:733px;height:26px;background:transparent"><svg style="left:83px;top:5px" width="12" height="16" viewBox="0 0 12 16" fill="none"><rect x="0.600" y="1.800" width="10.800" height="13.600" rx="1.200" stroke="#3d5553" stroke-width="1.100" fill="#fff"/><path d="M3.800 2V1.200a.8 .8 0 0 1 .8 -.8H7.400a.8 .8 0 0 1 .8 .8V2" stroke="#3d5553" stroke-width="0.900" fill="#fff"/><path d="M2.400 5.200h1.400M2.400 8.200h1.400M2.400 11.200h1.400" stroke="#222" stroke-width="1.500"/><path d="M2.400 6.600h1.400M2.400 9.600h1.400" stroke="#222" stroke-width="0.600"/><path d="M4.800 5.200H9.800M4.800 8.200H9.800M4.800 11.200H9.800" stroke="#7ac621" stroke-width="1.100"/><path d="M4.800 12.600H9.800" stroke="#b9dd8a" stroke-width="1"/></svg><div class="t" style="left:101px;line-height:27.4px">2025-09-17 10-42-35</div></div>
<div class="trow" style="top:759px;height:26px;background:transparent"><svg style="left:83px;top:5px" width="12" height="16" viewBox="0 0 12 16" fill="none"><rect x="0.600" y="1.800" width="10.800" height="13.600" rx="1.200" stroke="#3d5553" stroke-width="1.100" fill="#fff"/><path d="M3.800 2V1.200a.8 .8 0 0 1 .8 -.8H7.400a.8 .8 0 0 1 .8 .8V2" stroke="#3d5553" stroke-width="0.900" fill="#fff"/><path d="M2.400 5.200h1.400M2.400 8.200h1.400M2.400 11.200h1.400" stroke="#222" stroke-width="1.500"/><path d="M2.400 6.600h1.400M2.400 9.600h1.400" stroke="#222" stroke-width="0.600"/><path d="M4.800 5.200H9.800M4.800 8.200H9.800M4.800 11.200H9.800" stroke="#7ac621" stroke-width="1.100"/><path d="M4.800 12.600H9.800" stroke="#b9dd8a" stroke-width="1"/></svg><div class="t" style="left:101px;line-height:27.4px">2025-09-17 10-43-34</div></div>
<div class="trow" style="top:785px;height:26px;background:transparent"><svg style="left:83px;top:5px" width="12" height="16" viewBox="0 0 12 16" fill="none"><rect x="0.600" y="1.800" width="10.800" height="13.600" rx="1.200" stroke="#3d5553" stroke-width="1.100" fill="#fff"/><path d="M3.800 2V1.200a.8 .8 0 0 1 .8 -.8H7.400a.8 .8 0 0 1 .8 .8V2" stroke="#3d5553" stroke-width="0.900" fill="#fff"/><path d="M2.400 5.200h1.400M2.400 8.200h1.400M2.400 11.200h1.400" stroke="#222" stroke-width="1.500"/><path d="M2.400 6.600h1.400M2.400 9.600h1.400" stroke="#222" stroke-width="0.600"/><path d="M4.800 5.200H9.800M4.800 8.200H9.800M4.800 11.200H9.800" stroke="#7ac621" stroke-width="1.100"/><path d="M4.800 12.600H9.800" stroke="#b9dd8a" stroke-width="1"/></svg><div class="t" style="left:101px;line-height:27.4px">2025-09-17 10-44-02</div></div>
</div>
<div class="abs" style="left:546px;top:220px;width:5px;height:484px;background:#6fbe00;border-radius:1px"></div>
<div id="report"><div id="rclip"><div id="sheet">
<div class="abs" style="left:0;top:18px;width:900px;height:24px;line-height:25.400px;text-align:center;font-size:15.800px;color:#111;white-space:nowrap">ISO 16750-2:2023--4.4 叠加交流电压--Min-Level1-12V_RefTest</div>
<div class="ic h" style="left:50px;top:49px">测试方法</div>
<div class="ic h" style="left:210px;top:49px">频点类型</div>
<div class="ic h" style="left:370px;top:49px">起始频率</div>
<div class="ic h" style="left:530px;top:49px">终止频率</div>
<div class="ic h" style="left:690px;top:49px">扫频模式</div>
<div class="ic" style="left:50px;top:78px">闭环法</div>
<div class="ic" style="left:210px;top:78px">标准频点</div>
<div class="ic l" style="left:370px;top:78px">10Hz</div>
<div class="ic l" style="left:530px;top:78px">200000Hz</div>
<div class="ic l" style="left:690px;top:78px">Log</div>
<div class="ic h" style="left:50px;top:107px">步进</div>
<div class="ic h" style="left:210px;top:107px">样品供电电压</div>
<div class="ic h l" style="left:370px;top:107px">UPP</div>
<div class="ic h" style="left:530px;top:107px">Upp容差</div>
<div class="ic h l" style="left:690px;top:107px">IPP</div>
<div class="ic l" style="left:50px;top:136px">2%</div>
<div class="ic l" style="left:210px;top:136px">14V</div>
<div class="ic l" style="left:370px;top:136px">5V</div>
<div class="ic w" style="left:530px;top:136px">-0.200V ~ 0.200V</div>
<div class="ic l" style="left:690px;top:136px">15</div>
<div class="ic h" style="left:50px;top:165px">Ipp容差</div>
<div class="ic h" style="left:210px;top:165px">注入时间</div>
<div class="ic h" style="left:370px;top:165px">参考测试</div>
<div class="ic h" style="left:530px;top:165px">注入测试</div>
<div class="ic h" style="left:690px;top:165px"></div>
<div class="ic w" style="left:50px;top:194px">-0.200A ~ 0.200A</div>
<div class="ic l" style="left:210px;top:194px">2s</div>
<div class="ic" style="left:370px;top:194px">√</div>
<div class="ic" style="left:530px;top:194px">√</div>
<div class="ic" style="left:690px;top:194px"></div>
<svg class="abs" style="left:0;top:0" width="900" height="967" viewBox="0 0 900 967" font-family="Liberation Sans,sans-serif" font-size="12">
<path d="M194.2 311V664" stroke="#dce8f3" stroke-width="1.500" stroke-dasharray="5 2" fill="none"/>
<path d="M225.8 311V664" stroke="#dce8f3" stroke-width="1.500" stroke-dasharray="5 2" fill="none"/>
<path d="M247.3 311V664" stroke="#dce8f3" stroke-width="1.500" stroke-dasharray="5 2" fill="none"/>
<path d="M263.5 311V664" stroke="#dce8f3" stroke-width="1.500" stroke-dasharray="5 2" fill="none"/>
<path d="M276.6 311V664" stroke="#dce8f3" stroke-width="1.500" stroke-dasharray="5 2" fill="none"/>
<path d="M349.2 311V664" stroke="#dce8f3" stroke-width="1.500" stroke-dasharray="5 2" fill="none"/>
<path d="M380.8 311V664" stroke="#dce8f3" stroke-width="1.500" stroke-dasharray="5 2" fill="none"/>
<path d="M402.3 311V664" stroke="#dce8f3" stroke-width="1.500" stroke-dasharray="5 2" fill="none"/>
<path d="M418.5 311V664" stroke="#dce8f3" stroke-width="1.500" stroke-dasharray="5 2" fill="none"/>
<path d="M431.6 311V664" stroke="#dce8f3" stroke-width="1.500" stroke-dasharray="5 2" fill="none"/>
<path d="M504.2 311V664" stroke="#dce8f3" stroke-width="1.500" stroke-dasharray="5 2" fill="none"/>
<path d="M535.8 311V664" stroke="#dce8f3" stroke-width="1.500" stroke-dasharray="5 2" fill="none"/>
<path d="M557.3 311V664" stroke="#dce8f3" stroke-width="1.500" stroke-dasharray="5 2" fill="none"/>
<path d="M573.5 311V664" stroke="#dce8f3" stroke-width="1.500" stroke-dasharray="5 2" fill="none"/>
<path d="M586.6 311V664" stroke="#dce8f3" stroke-width="1.500" stroke-dasharray="5 2" fill="none"/>
<path d="M659.2 311V664" stroke="#dce8f3" stroke-width="1.500" stroke-dasharray="5 2" fill="none"/>
<path d="M690.8 311V664" stroke="#dce8f3" stroke-width="1.500" stroke-dasharray="5 2" fill="none"/>
<path d="M712.3 311V664" stroke="#dce8f3" stroke-width="1.500" stroke-dasharray="5 2" fill="none"/>
<path d="M728.5 311V664" stroke="#dce8f3" stroke-width="1.500" stroke-dasharray="5 2" fill="none"/>
<path d="M741.6 311V664" stroke="#dce8f3" stroke-width="1.500" stroke-dasharray="5 2" fill="none"/>
<path d="M129 311.5H799.5" stroke="#d4e2ef" stroke-width="1.300" fill="none"/>
<path d="M129 346.5H799.5" stroke="#d4e2ef" stroke-width="1.300" fill="none"/>
<path d="M129 381.5H799.5" stroke="#d4e2ef" stroke-width="1.300" fill="none"/>
<path d="M129 416.5H799.5" stroke="#d4e2ef" stroke-width="1.300" fill="none"/>
<path d="M129 451.5H799.5" stroke="#d4e2ef" stroke-width="1.300" fill="none"/>
<path d="M129 486.5H799.5" stroke="#d4e2ef" stroke-width="1.300" fill="none"/>
<path d="M129 521.5H799.5" stroke="#d4e2ef" stroke-width="1.300" fill="none"/>
<path d="M129 556.5H799.5" stroke="#d4e2ef" stroke-width="1.300" fill="none"/>
<path d="M129 591.5H799.5" stroke="#d4e2ef" stroke-width="1.300" fill="none"/>
<path d="M129 626.5H799.5" stroke="#d4e2ef" stroke-width="1.300" fill="none"/>
<path d="M129 661.5H799.5" stroke="#d4e2ef" stroke-width="1.300" fill="none"/>
<path d="M132.5 311V665" stroke="#d4e2ef" stroke-width="1.400" fill="none"/>
<path d="M287.5 311V665" stroke="#d4e2ef" stroke-width="1.400" fill="none"/>
<path d="M442.5 311V665" stroke="#d4e2ef" stroke-width="1.400" fill="none"/>
<path d="M597.5 311V665" stroke="#d4e2ef" stroke-width="1.400" fill="none"/>
<path d="M752.5 311V665" stroke="#d4e2ef" stroke-width="1.400" fill="none"/>
<polyline points="132.0,545.3 145.3,545.1 158.7,545.3 172.0,545.6 185.4,545.9 198.7,546.1 212.1,546.1 225.4,545.0 238.8,545.6 252.1,545.0 265.5,545.3 278.8,545.5 292.2,545.0 305.5,544.5 318.9,544.0 332.2,543.8 345.6,546.0 358.9,547.0 372.2,548.8 385.6,548.0 398.9,550.6 412.3,550.4 425.6,550.6 439.0,552.0 452.3,551.0 465.7,551.8 479.0,553.0 492.4,552.0 505.7,549.5 519.1,546.8 532.4,547.3 545.8,546.2 559.1,545.7 572.5,545.3 585.8,545.3 599.2,543.7 612.5,546.7 625.8,544.8 639.2,545.3 652.5,547.2 665.9,546.7 679.2,547.9 692.6,544.5 705.9,542.6 719.3,547.9 732.6,566.0 746.0,583.7 759.3,573.0 772.7,546.4 786.0,548.3 799.4,547.5" fill="none" stroke="#ffb41e" stroke-width="2" stroke-linejoin="round"/>
<polyline points="132.0,545.3 145.3,545.1 158.7,544.9 172.0,544.8 185.4,545.8 198.7,545.4 212.1,544.9 225.4,544.2 238.8,545.3 252.1,544.4 265.5,544.7 278.8,544.4 292.2,544.2 305.5,543.3 318.9,542.7 332.2,542.9 345.6,545.2 358.9,546.3 372.2,547.8 385.6,547.3 398.9,550.0 412.3,549.2 425.6,550.0 439.0,551.5 452.3,550.3 465.7,551.3 479.0,552.8 492.4,551.7 505.7,549.0 519.1,546.2 532.4,546.8 545.8,545.6 559.1,545.0 572.5,544.5 585.8,544.6 599.2,542.5 612.5,546.4 625.8,543.9 639.2,545.3 652.5,548.4 665.9,550.0 679.2,551.4 692.6,552.2 705.9,555.8 719.3,565.2 732.6,580.6 746.0,568.4 759.3,530.7 772.7,491.5 786.0,502.2 799.4,502.2" fill="none" stroke="#1fa90a" stroke-width="2" stroke-linejoin="round"/>
<polyline points="132.0,601.4 145.3,596.1 158.7,589.2 172.0,581.4 185.4,573.0 198.7,561.3 212.1,549.4 225.4,532.1 238.8,515.7 252.1,498.6 265.5,477.0 278.8,458.4 292.2,436.7 305.5,414.5 318.9,398.0 332.2,383.3 345.6,380.2 358.9,377.0 372.2,382.9 385.6,377.2 398.9,382.9 412.3,379.0 425.6,377.9 439.0,381.6 452.3,378.2 465.7,379.0 479.0,380.6 492.4,380.6 505.7,377.6 519.1,379.3 532.4,416.4 545.8,465.0 559.1,513.4 572.5,555.8 585.8,582.5 599.2,599.1 612.5,615.8 625.8,615.9 639.2,601.0 652.5,588.0 665.9,569.9 679.2,545.6 692.6,513.5 705.9,468.2 719.3,407.4 732.6,378.7 746.0,382.3 759.3,382.3 772.7,386.2 786.0,448.6 799.4,484.7" fill="none" stroke="#00ffff" stroke-width="2" stroke-linejoin="round"/>
<text x="126.5" y="315.5" text-anchor="end" fill="#111">19.2</text>
<text x="126.5" y="350.5" text-anchor="end" fill="#111">17.1</text>
<text x="126.5" y="385.5" text-anchor="end" fill="#111">14.9</text>
<text x="126.5" y="420.5" text-anchor="end" fill="#111">12.8</text>
<text x="126.5" y="455.5" text-anchor="end" fill="#111">10.7</text>
<text x="126.5" y="490.5" text-anchor="end" fill="#111">8.6</text>
<text x="126.5" y="525.5" text-anchor="end" fill="#111">6.5</text>
<text x="126.5" y="560.5" text-anchor="end" fill="#111">4.4</text>
<text x="126.5" y="595.5" text-anchor="end" fill="#111">2.2</text>
<text x="126.5" y="630.5" text-anchor="end" fill="#111">0.1</text>
<text x="126.5" y="665.5" text-anchor="end" fill="#111">-2.0</text>
<text x="132.0" y="678" text-anchor="middle" fill="#111">10</text>
<text x="287.0" y="678" text-anchor="middle" fill="#111">100</text>
<text x="442.0" y="678" text-anchor="middle" fill="#111">1000</text>
<text x="597.0" y="678" text-anchor="middle" fill="#111">10000</text>
<text x="752.0" y="678" text-anchor="middle" fill="#111">100000</text>
<text x="421.5" y="697.8" font-size="12.5" textLength="87.6" lengthAdjust="spacingAndGlyphs" font-weight="bold" fill="#333">Frequency(Hz)</text>
<text transform="translate(93.5,544.2) rotate(-90)" font-size="12.5" textLength="115.6" lengthAdjust="spacingAndGlyphs" font-weight="bold" fill="#333">Volt(V)/Current(A)</text>
<text x="150" y="304.8" font-size="12.5" textLength="132.3" lengthAdjust="spacingAndGlyphs" fill="#111">X = 356874,Y = 5.3327</text>
<rect x="327.5" y="279.5" width="7" height="7" fill="#ffb41e" stroke="#111" stroke-width="1"/>
<text x="340.5" y="287" font-size="11.800" fill="#4f5661">Ref UPP(V)</text>
<rect x="411.5" y="279.5" width="7" height="7" fill="#1fa90a" stroke="#111" stroke-width="1"/>
<text x="424.5" y="287" font-size="11.800" fill="#4f5661">Ref UR(V)</text>
<rect x="489.5" y="279.5" width="7" height="7" fill="#00ffff" stroke="#111" stroke-width="1"/>
<text x="503" y="287" font-size="11.800" fill="#4f5661">Ref IPP(A)</text>
</svg>
<div class="abs" style="left:50px;top:739px;width:800px;height:260px">
<div class="dh" style="left:0;width:36px"></div>
<div class="dh" style="left:36px;width:151.5px">Freq(Hz)</div>
<div class="dh" style="left:189.5px;width:150.0px">Amp(V)</div>
<div class="dh" style="left:341.5px;width:150.0px">UR(V)</div>
<div class="dh" style="left:493.5px;width:149.5px">UPP(V)</div>
<div class="dh" style="left:645px;width:149px">IPP(A)</div>
<div class="rn" style="top:31px">1</div>
<div class="dc" style="left:36px;top:31px;width:152.5px">10.00</div>
<div class="dc" style="left:188.5px;top:31px;width:152.0px">0.83</div>
<div class="dc" style="left:340.5px;top:31px;width:152.0px">5.01</div>
<div class="dc" style="left:492.5px;top:31px;width:151.5px">5.01</div>
<div class="dc" style="left:644px;top:31px;width:151px">1.61</div>
<div class="rn" style="top:60px">2</div>
<div class="dc" style="left:36px;top:60px;width:152.5px">12.19</div>
<div class="dc" style="left:188.5px;top:60px;width:152.0px">0.83</div>
<div class="dc" style="left:340.5px;top:60px;width:152.0px">5.02</div>
<div class="dc" style="left:492.5px;top:60px;width:151.5px">5.02</div>
<div class="dc" style="left:644px;top:60px;width:151px">1.93</div>
<div class="rn" style="top:89px">3</div>
<div class="dc" style="left:36px;top:89px;width:152.5px">14.86</div>
<div class="dc" style="left:188.5px;top:89px;width:152.0px">0.83</div>
<div class="dc" style="left:340.5px;top:89px;width:152.0px">5.03</div>
<div class="dc" style="left:492.5px;top:89px;width:151.5px">5.01</div>
<div class="dc" style="left:644px;top:89px;width:151px">2.35</div>
<div class="rn" style="top:118px">4</div>
<div class="dc" style="left:36px;top:118px;width:152.5px">18.12</div>
<div class="dc" style="left:188.5px;top:118px;width:152.0px">0.83</div>
<div class="dc" style="left:340.5px;top:118px;width:152.0px">5.04</div>
<div class="dc" style="left:492.5px;top:118px;width:151.5px">4.99</div>
<div class="dc" style="left:644px;top:118px;width:151px">2.82</div>
<div class="rn" style="top:147px">5</div>
<div class="dc" style="left:36px;top:147px;width:152.5px">22.08</div>
<div class="dc" style="left:188.5px;top:147px;width:152.0px">0.83</div>
<div class="dc" style="left:340.5px;top:147px;width:152.0px">4.98</div>
<div class="dc" style="left:492.5px;top:147px;width:151.5px">4.97</div>
<div class="dc" style="left:644px;top:147px;width:151px">3.33</div>
<div class="rn" style="top:176px">6</div>
<div class="dc" style="left:36px;top:176px;width:152.5px">26.92</div>
<div class="dc" style="left:188.5px;top:176px;width:152.0px">0.83</div>
<div class="dc" style="left:340.5px;top:176px;width:152.0px">5.00</div>
<div class="dc" style="left:492.5px;top:176px;width:151.5px">4.96</div>
<div class="dc" style="left:644px;top:176px;width:151px">4.04</div>
<div class="rn" style="top:205px">7</div>
<div class="dc" style="left:36px;top:205px;width:152.5px">32.82</div>
<div class="dc" style="left:188.5px;top:205px;width:152.0px">0.83</div>
<div class="dc" style="left:340.5px;top:205px;width:152.0px">5.03</div>
<div class="dc" style="left:492.5px;top:205px;width:151.5px">4.96</div>
<div class="dc" style="left:644px;top:205px;width:151px">4.76</div>
</div>
<div class="abs" style="left:845px;top:739px;width:5px;height:64px;background:#6fbe00;border-radius:1px"></div>
</div>
<div class="abs" style="left:1312px;top:0;width:5px;height:431px;background:#6ec000;border-radius:1.5px"></div>
</div></div>
</body></html>
